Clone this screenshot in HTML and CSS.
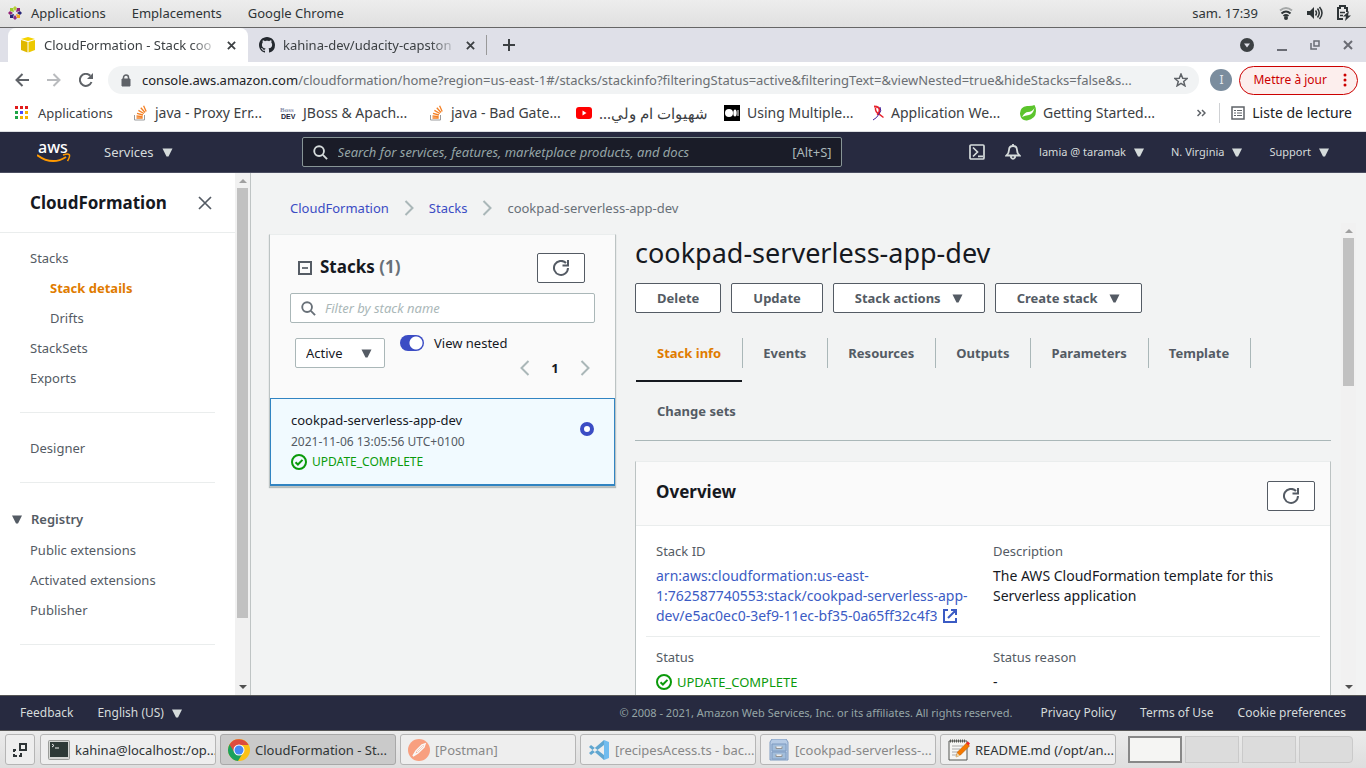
FILE: index.html
```html
<!DOCTYPE html>
<html lang="en">
<head>
<meta charset="utf-8">
<title>CloudFormation - Stack cookpad-serverless-app-dev</title>
<link rel="stylesheet" href="styles.css">
</head>
<body>
<svg class="defs" aria-hidden="true">
  <symbol id="caret" viewBox="0 0 10 9"><path d="M0 0.5h10L6 8.5H4z"/></symbol>
  <symbol id="refresh" viewBox="0 0 16 16"><path d="M15 8a7 7 0 1 1-2-5M15 0v5.5h-5.5" fill="none" stroke="currentColor" stroke-width="2"/></symbol>
  <symbol id="search" viewBox="0 0 16 16"><circle cx="6.5" cy="6.5" r="5.2" fill="none" stroke="currentColor" stroke-width="2"/><path d="M10.5 10.5L15 15" stroke="currentColor" stroke-width="2"/></symbol>
  <symbol id="chev" viewBox="0 0 10 16"><path d="M1.5 1L8.5 8l-7 7" fill="none" stroke="#aab7b8" stroke-width="2"/></symbol>
  <symbol id="check" viewBox="0 0 16 16"><circle cx="8" cy="8" r="7" fill="none" stroke="currentColor" stroke-width="2"/><path d="M4.5 8.2l2.4 2.3 4.6-4.6" fill="none" stroke="currentColor" stroke-width="2"/></symbol>
  <symbol id="cross" viewBox="0 0 10 10"><path d="M1 1l8 8M9 1L1 9" stroke="currentColor" stroke-width="2"/></symbol>
  <symbol id="overflow" viewBox="0 0 16 16"><path d="M2.5 10v5h10v-5" fill="none" stroke="#9a9b9d" stroke-width="1"/><path d="M4.5 13h6.2M4.5 11l6.1 .6M5 8.4l6 1.6M6.4 5.4l5.5 3.1M8.8 2.7l4.2 4.8M11.6 .8l2.6 5.7" stroke="#f48024" stroke-width="1.3"/></symbol>
</svg>

<header class="desk-top">
  <nav class="desk-menu">
    <button><svg width="14" height="14" viewBox="0 0 14 14"><path d="M7 0l2 2-2 3-2-3z" fill="#b7cf35"/><path d="M7 14l2-2-2-3-2 3z" fill="#8c2d85"/><path d="M0 7l2-2 3 2-3 2z" fill="#932279"/><path d="M14 7l-2-2-3 2 3 2z" fill="#262577"/><path d="M2 2h3l1 4-4-1z" fill="#9ccd2a"/><path d="M12 2v3l-4 1 1-4z" fill="#932279"/><path d="M2 12V9l4-1-1 4z" fill="#262577"/><path d="M12 12H9L8 8l4 1z" fill="#efa724"/></svg>Applications</button>
    <button>Emplacements</button>
    <button>Google Chrome</button>
  </nav>
  <div class="desk-status">
    <span>sam. 17:39</span>
    <svg width="14" height="14" viewBox="0 0 14 14" fill="none" stroke="#2e3436" stroke-width="2"><path d="M1 4.500Q7-.5 13 4.500" stroke="#a5a8a8"/><path d="M2.500 7.500Q7 3.500 11.500 7.500"/><path d="M4.500 10Q7 8 9.500 10"/><circle cx="7" cy="12" r="1" fill="#2e3436"/></svg>
    <svg width="16" height="14" viewBox="0 0 16 14" fill="none" stroke="#2e3436" stroke-width="1.500"><path d="M0 5h3l4-4v12L3 9H0z" fill="#2e3436" stroke="none"/><path d="M8.500 4.500q2 2.500 0 5M10.500 2.500q3.500 4.500 0 9M12.500 1q5 6 0 12"/></svg>
    <svg width="14" height="16" viewBox="0 0 14 16" fill="none" stroke="#2e3436" stroke-width="2"><path d="M6 14H1V3h2V1h5v2h2v4"/><path d="M3 7.500h5M3 10.500h3" stroke-width="1.500"/><path d="M12 6l-6 5.500h3L8 16l6-5.500h-3z" fill="#2e3436" stroke="none"/></svg>
  </div>
</header>

<div class="tabstrip">
  <div class="tab tab-on">
    <svg width="16" height="16" viewBox="0 0 16 16"><path d="M8 0l7 2-7 2-7-2z" fill="#f5d300"/><path d="M1 3l6.500 2v10.500L1 13z" fill="#e0b800"/><path d="M15 3L8.500 5v10.500L15 13z" fill="#edc900"/></svg>
    <span class="tab-name">CloudFormation - Stack coo</span>
    <button class="tab-x" aria-label="Close tab"><svg width="9" height="9"><use href="#cross"/></svg></button>
  </div>
  <div class="tab">
    <svg width="16" height="16" viewBox="0 0 16 16"><path fill="#24292f" d="M8 0C3.580 0 0 3.580 0 8c0 3.540 2.290 6.530 5.470 7.590.4.070.55-.17.55-.38v-1.490c-2.010.37-2.530-.49-2.690-.94-.09-.23-.48-.94-.82-1.130-.28-.15-.68-.52-.01-.53.63-.01 1.080.58 1.230.82.72 1.210 1.870.87 2.330.66.07-.52.28-.87.51-1.070-1.780-.2-3.640-.89-3.640-3.950 0-.87.31-1.590.82-2.150-.08-.2-.36-1.020.08-2.120 0 0 .67-.21 2.200.82.64-.18 1.320-.27 2-.27s1.360.09 2 .27c1.530-1.040 2.200-.82 2.200-.82.44 1.100.16 1.920.08 2.120.51.56.82 1.270.82 2.150 0 3.070-1.870 3.750-3.650 3.950.29.25.54.73.54 1.480v2.200c0 .21.15.46.55.38A8.010 8.010 0 0 0 16 8c0-4.420-3.580-8-8-8z"/></svg>
    <span class="tab-name">kahina-dev/udacity-capston</span>
    <button class="tab-x" aria-label="Close tab"><svg width="9" height="9"><use href="#cross"/></svg></button>
  </div>
  <button class="new-tab" aria-label="New tab"><svg width="12" height="12" viewBox="0 0 12 12"><path d="M6 0v12M0 6h12" stroke="#3c4043" stroke-width="2"/></svg></button>
  <div class="win-btns">
    <button aria-label="Search tabs"><svg width="14" height="14" viewBox="0 0 14 14"><circle cx="7" cy="7" r="7" fill="#3c4043"/><path d="M4 5.500h6L7 9.500z" fill="#dfe0e8"/></svg></button>
    <button aria-label="Minimize"><svg width="10" height="12" viewBox="0 0 10 12"><path d="M0 11h10" stroke="#6a6c74" stroke-width="2"/></svg></button>
    <button aria-label="Restore"><svg width="10" height="10" viewBox="0 0 10 10" fill="none" stroke="#6a6c74"><path d="M4 1h5v5H4z" stroke-width="1.500"/><path d="M1 3v6h6" stroke-width="1.500"/></svg></button>
    <button aria-label="Close"><svg width="10" height="10"><use href="#cross"/></svg></button>
  </div>
</div>

<div class="toolbar">
  <button aria-label="Back"><svg width="14" height="14" viewBox="0 0 14 14" fill="none" stroke="#5f6368" stroke-width="2"><path d="M14 7H2M7.500 1L1.500 7l6 6"/></svg></button>
  <button aria-label="Forward"><svg width="14" height="14" viewBox="0 0 14 14" fill="none" stroke="#b9bbbe" stroke-width="2"><path d="M0 7h12M6.500 1l6 6-6 6"/></svg></button>
  <button aria-label="Reload"><svg width="14" height="14" viewBox="0 0 14 14"><path d="M12.500 9A6 6 0 1 1 11.300 2.800" fill="none" stroke="#5f6368" stroke-width="2"/><path d="M14 0v6H8z" fill="#5f6368"/></svg></button>
  <div class="omnibox">
    <svg width="10" height="13" viewBox="0 0 10 13"><path d="M1 5h8v7H1z" fill="#5f6368" stroke="#5f6368"/><path d="M2.500 5V3.500a2.500 2.500 0 0 1 5 0V5" fill="none" stroke="#5f6368" stroke-width="1.500"/></svg>
    <span class="url"><b>console.aws.amazon.com</b>/cloudformation/home?region=us-east-1#/stacks/stackinfo?filteringStatus=active&amp;filteringText=&amp;viewNested=true&amp;hideStacks=false&amp;s...</span>
    <button aria-label="Bookmark"><svg width="14" height="14" viewBox="0 0 14 14" fill="none"><path d="M7 1l1.700 4.200 4.500.3-3.500 2.900 1.200 4.400L7 10.400l-3.900 2.400 1.200-4.400L.8 5.500l4.500-.3z" stroke="#5f6368" stroke-width="1.500"/></svg></button>
  </div>
  <button class="avatar">I</button>
  <button class="update">Mettre à jour <svg width="4" height="14" viewBox="0 0 4 14"><circle cx="2" cy="2" r="1.500"/><circle cx="2" cy="7" r="1.500"/><circle cx="2" cy="12" r="1.500"/></svg></button>
</div>

<nav class="bookmarks">
  <a class="apps" href="#"><svg width="14" height="14" viewBox="0 0 14 14"><path d="M0 0h3v3H0zM5 0h3v3H5zM10 0h3v3h-3z" fill="#e01b1b"/><path d="M0 5h3v3H0zM0 10h3v3H0z" fill="#1ea446"/><path d="M5 5h3v3H5z" fill="#4a4aff"/><path d="M10 5h3v3h-3zM5 10h3v3H5zM10 10h3v3h-3z" fill="#f5b400"/></svg>Applications</a>
  <a class="mark" href="#"><svg width="16" height="16"><use href="#overflow"/></svg>java - Proxy Err...</a>
  <a class="mark" href="#"><svg width="16" height="16" viewBox="0 0 16 16"><text x="0" y="7" class="jb1">Boss</text><text x="1" y="14" class="jb2">DEV</text></svg>JBoss &amp; Apach...</a>
  <a class="mark" href="#"><svg width="16" height="16"><use href="#overflow"/></svg>java - Bad Gate...</a>
  <a class="mark" href="#"><svg width="16" height="12" viewBox="0 0 16 12"><rect width="16" height="12" rx="3" fill="#f00"/><path d="M6.500 3.500v5L10.500 6z" fill="#fff"/></svg><span class="arabic" dir="rtl" lang="ar">شهيوات ام ولي...</span></a>
  <a class="mark" href="#"><svg width="16" height="16" viewBox="0 0 16 16"><path d="M0 0h16v16H0z" fill="#000"/><circle cx="5" cy="8" r="4" fill="#fff"/><ellipse cx="11" cy="8" rx="1.700" ry="3.500" fill="#fff"/><path d="M13.500 5h1v6h-1z" fill="#fff"/></svg>Using Multiple...</a>
  <a class="mark" href="#"><svg width="12" height="16" viewBox="0 0 12 16" fill="none"><path d="M2 1.500q6 0 5.500 4T5 9" stroke="#e8232d" stroke-width="2"/><path d="M3.500 3q-.5 4 4 6.500l4 3" stroke="#e8232d" stroke-width="1.500"/><path d="M8 2q2 4-1 7-2 4-6 6" stroke="#40209a" stroke-width="1"/></svg>Application We...</a>
  <a class="mark" href="#"><svg width="16" height="16" viewBox="0 0 16 16"><path d="M14.500 0q1.500 2.500 1.500 6 0 8-9 9.500Q1 16 0 9q-.2-7 7-8 5 .3 7.500-1z" fill="#5bc42c"/><path d="M2 12q3-5 6-5 4 0 6.500-4Q13 9 9 10q-4 .3-7 2z" fill="#fff"/></svg>Getting Started...</a>
  <div class="bm-end"><button aria-label="More bookmarks"><svg width="9" height="8" viewBox="0 0 9 8" fill="none"><path d="M.5 1l3 3-3 3M5 1l3 3-3 3" stroke="#5f6368" stroke-width="1.500"/></svg></button><a href="#" class="reading"><svg width="14" height="14" viewBox="0 0 14 14" stroke="#5f6368" fill="none"><path d="M1 1h12v12H1z" stroke-width="1.500"/><path d="M3 4.500h2M3 7h2M3 9.500h2M6 4.500h5M6 7h5M6 9.500h5"/></svg>Liste de lecture</a></div>
</nav>

<header class="aws-head">
  <a class="logo" href="#" aria-label="AWS home"><svg width="34" height="24" viewBox="0 0 34 24"><text x="1" y="13" class="logo-text">aws</text><path d="M0 15q15 11 29 2" fill="none" stroke="#f90" stroke-width="2"/><path d="M26 15q6-2 6.500 0t-2 6" fill="none" stroke="#f90" stroke-width="1.500"/></svg></a>
  <button class="services">Services <svg width="11" height="9"><use href="#caret"/></svg></button>
  <label class="aws-search"><svg width="15" height="15"><use href="#search"/></svg><input aria-label="Search services" placeholder="Search for services, features, marketplace products, and docs"><kbd>[Alt+S]</kbd></label>
  <div class="aws-right">
    <button aria-label="CloudShell"><svg width="16" height="16" viewBox="0 0 16 16" fill="none" stroke="currentColor" stroke-width="1.700"><rect x="1" y="1" width="14" height="14" rx="1"/><path d="M4 3.500L8.500 8 4 12.500M9 12.300h5"/></svg></button>
    <button class="bell" aria-label="Notifications"><svg width="16" height="16" viewBox="0 0 16 16" fill="none" stroke="currentColor" stroke-width="1.800"><path d="M1.500 11.500Q4 9 4 6q0-4 4-4t4 4q0 3 2.500 5.500zM8 0v2M6 12v1.500q2 2.500 4 0V12"/></svg></button>
    <button class="user">lamia @ taramak <svg width="10" height="9"><use href="#caret"/></svg></button>
    <button class="region">N. Virginia <svg width="10" height="9"><use href="#caret"/></svg></button>
    <button class="support">Support <svg width="10" height="9"><use href="#caret"/></svg></button>
  </div>
</header>

<div class="workspace">
  <aside class="side">
    <div class="side-in">
      <div class="side-head"><h2>CloudFormation</h2><button aria-label="Close navigation"><svg width="14" height="14" viewBox="0 0 14 14"><path d="M1 1l12 12M13 1L1 13" stroke="#545b64" stroke-width="1.700"/></svg></button></div>
      <nav class="side-nav">
        <a href="#">Stacks</a><a class="sub on" href="#">Stack details</a><a class="sub" href="#">Drifts</a><a href="#">StackSets</a><a href="#">Exports</a>
        <hr>
        <a href="#">Designer</a>
        <hr>
        <button class="group"><svg width="10" height="9"><use href="#caret"/></svg>Registry</button>
        <a href="#">Public extensions</a><a href="#">Activated extensions</a><a href="#">Publisher</a>
        <hr>
      </nav>
    </div>
    <div class="sbar"><i class="up"></i><i class="thumb"></i><i class="down"></i></div>
  </aside>

  <main class="content">
    <nav class="crumbs"><a href="#">CloudFormation</a><svg width="10" height="16"><use href="#chev"/></svg><a href="#">Stacks</a><svg width="10" height="16"><use href="#chev"/></svg><span>cookpad-serverless-app-dev</span></nav>
    <div class="cols">
      <section class="stacks">
        <div class="stacks-top">
          <div class="stacks-title"><svg width="14" height="14" viewBox="0 0 14 14" fill="none" stroke="#545b64"><path d="M1 1h12v12H1z" stroke-width="2"/><path d="M4 7h6" stroke-width="1.700"/></svg><h2>Stacks <span>(1)</span></h2><button class="btn icon-btn" aria-label="Refresh stacks"><svg width="16" height="16"><use href="#refresh"/></svg></button></div>
          <label class="filter"><svg width="15" height="15"><use href="#search"/></svg><input aria-label="Filter stacks" placeholder="Filter by stack name"></label>
          <div class="filters">
            <div class="pick"><select aria-label="Stack status"><option>Active</option></select><svg width="11" height="9"><use href="#caret"/></svg></div>
            <div class="filters-right">
              <label class="nested"><input type="checkbox" checked>View nested</label>
              <div class="pager"><button aria-label="Previous page"><svg class="flip" width="10" height="16"><use href="#chev"/></svg></button><b>1</b><button aria-label="Next page"><svg width="10" height="16"><use href="#chev"/></svg></button></div>
            </div>
          </div>
        </div>
        <label class="stack-row">
          <span class="stack-text"><span class="stack-name">cookpad-serverless-app-dev</span><span class="stack-date">2021-11-06 13:05:56 UTC+0100</span><span class="ok small"><svg width="16" height="16"><use href="#check"/></svg>UPDATE_COMPLETE</span></span>
          <input type="radio" name="stack" checked>
        </label>
      </section>

      <section class="detail">
        <h1>cookpad-serverless-app-dev</h1>
        <div class="actions"><button class="btn">Delete</button><button class="btn">Update</button><button class="btn">Stack actions <svg width="11" height="9"><use href="#caret"/></svg></button><button class="btn">Create stack <svg width="11" height="9"><use href="#caret"/></svg></button></div>
        <nav class="tabs"><a class="on" href="#">Stack info</a><a href="#">Events</a><a href="#">Resources</a><a href="#">Outputs</a><a href="#">Parameters</a><a href="#">Template</a><a class="last" href="#">Change sets</a></nav>
        <section class="card">
          <div class="card-head"><h2>Overview</h2><button class="btn icon-btn" aria-label="Refresh overview"><svg width="16" height="16"><use href="#refresh"/></svg></button></div>
          <dl class="facts">
            <div><dt>Stack ID</dt><dd><a href="#">arn:aws:cloudformation:us-east-<wbr>1:762587740553:stack/cookpad-serverless-app-<wbr>dev/e5ac0ec0-3ef9-11ec-bf35-0a65ff32c4f3 <svg width="14" height="14" viewBox="0 0 14 14" fill="none" stroke="currentColor" stroke-width="2"><path d="M5 1H1v12h12V9M8 1h5v5M13 1L5 9"/></svg></a></dd></div>
            <div><dt>Description</dt><dd>The AWS CloudFormation template for this Serverless application</dd></div>
          </dl>
          <dl class="facts">
            <div><dt>Status</dt><dd class="ok"><svg width="16" height="16"><use href="#check"/></svg>UPDATE_COMPLETE</dd></div>
            <div><dt>Status reason</dt><dd>-</dd></div>
          </dl>
        </section>
      </section>
      <div class="sbar main-bar"><i class="up"></i><i class="thumb"></i><i class="down"></i></div>
    </div>
  </main>
</div>

<footer class="aws-foot">
  <a href="#">Feedback</a><button>English (US) <svg width="10" height="9"><use href="#caret"/></svg></button>
  <span class="legal">© 2008 - 2021, Amazon Web Services, Inc. or its affiliates. All rights reserved.</span><a href="#">Privacy Policy</a><a href="#">Terms of Use</a><a href="#">Cookie preferences</a>
</footer>

<footer class="taskbar">
  <button class="task show" aria-label="Show desktop"><svg width="14" height="14" viewBox="0 0 14 14" fill="none" stroke="#2e3436" stroke-width="2"><path d="M7 1h6v6H7z"/><path d="M3 7H1v2M1 11v2h3M6 13h2v-3"/></svg></button>
  <button class="task"><svg width="22" height="22" viewBox="0 0 22 22"><rect x=".5" y="1.500" width="21" height="19" rx="1" fill="#d5d7d4" stroke="#9b9d9a"/><path d="M2 3h18v15H2z" fill="#2e3a37"/><path d="M4 5l2 1.500L4 8M7 9h4" fill="none" stroke="#eee"/></svg>kahina@localhost:/op...</button>
  <button class="task current"><svg width="22" height="22" viewBox="0 0 22 22"><circle cx="11" cy="11" r="11" fill="#fbc116"/><path d="M11 11L1.500 5.500A11 11 0 0 0 10 22l5.500-9z" fill="#1aa15f"/><path d="M1.500 5.500A11 11 0 0 1 20.600 6H11l-4.500 7.500z" fill="#dd4b3e"/><circle cx="11" cy="11" r="5.500" fill="#fff"/><circle cx="11" cy="11" r="4.500" fill="#4688f4"/></svg>CloudFormation - St...</button>
  <button class="task dim"><svg width="22" height="22" viewBox="0 0 22 22"><circle cx="11" cy="11" r="11" fill="#ff6c37"/><path d="M5 17l3-5 6-6 3-1-1 3-6 6z" fill="none" stroke="#fff" stroke-width="1.500"/><path d="M9 13l6-6" stroke="#fff"/></svg>[Postman]</button>
  <button class="task dim"><svg width="22" height="22" viewBox="0 0 22 22"><path d="M1 8l2-2 13 10v5zM1 14l2 2L16 6V1z" fill="#0277bd"/><path d="M16 1l5 2v16l-5 2z" fill="#1f9cf0"/></svg>[recipesAcess.ts - bac...</button>
  <button class="task dim"><svg width="22" height="22" viewBox="0 0 22 22"><path d="M4 0h14l2 3v18H2V3z" fill="#92b4df" stroke="#3465a4"/><path d="M4 5h14v7H4zM4 13h14v7H4z" fill="#729fcf" stroke="#3465a4"/><path d="M8 7.500v2h6v-2M8 15.500v2h6v-2" fill="#eee" stroke="#555"/></svg>[cookpad-serverless-...</button>
  <button class="task"><svg width="22" height="22" viewBox="0 0 22 22"><path d="M1 2h18v19H1z" fill="#f6f6f4" stroke="#555753"/><path d="M2 2h16" stroke="#555753" stroke-width="3" stroke-dasharray="1 1"/><path d="M4 7h11M4 10h8M4 13h6M4 16h5" stroke="#aaa"/><path d="M8 18l1.500-5 9-9 3 3-9 9z" fill="#f57900" stroke="#a85600" stroke-width=".5"/><path d="M8 18l1.300-4 2.700 2.700z" fill="#e9d6a8"/><path d="M18 4l2-1.500 2 2-1.500 2z" fill="#ef2929"/></svg>README.md (/opt/an...</button>
  <div class="desks"><i class="now"></i><i></i><i></i><i></i></div>
</footer>
</body>
</html>
```
FILE: styles.css
```css
* { box-sizing: border-box; }
body { margin: 0; height: 100vh; display: flex; flex-direction: column; overflow: hidden; font: 13px/20px "Noto Sans", sans-serif; color: #16191f; background: #f2f3f3; }
body > * { flex: none; }
button { font: inherit; color: inherit; background: none; border: 0; padding: 0; display: flex; align-items: center; white-space: nowrap; }
a { color: inherit; text-decoration: none; }
h1, h2, dl, dd { margin: 0; }
svg { flex: none; display: block; }
svg:not([fill]) { fill: currentColor; }
.defs { position: absolute; width: 0; height: 0; }

.desk-top { height: 28px; padding: 0 15px 2px 8px; display: flex; align-items: center; justify-content: space-between; background: linear-gradient(#ededed, #e0e0e0); border-bottom: 1px solid #666; color: #2e3436; }
.desk-menu { display: flex; gap: 26px; }
.desk-menu button { gap: 9px; }
.desk-status { display: flex; align-items: center; gap: 14px; }
.desk-status span { margin-right: 7px; }

.tabstrip { height: 34px; display: flex; align-items: stretch; padding-left: 8px; background: #dfe0e8; color: #3c4043; }
.tab { width: 238px; display: flex; align-items: center; padding: 0 11px; gap: 8px; }
.tab-on { width: 240px; padding: 0 12px; background: #fff; border-radius: 8px 8px 0 0; }
.tab-name { flex: 1; overflow: hidden; white-space: nowrap; mask-image: linear-gradient(90deg, #000 84%, transparent 100%); }
.new-tab { border-left: 1px solid #999; margin: 7px 0; padding-left: 16px; }
.win-btns { margin-left: auto; display: flex; gap: 23px; padding-right: 13px; color: #6a6c74; }

.toolbar { height: 36px; background: #fff; display: flex; align-items: center; padding: 0 8px 0 15px; gap: 18px; }
.omnibox { flex: 1; min-width: 0; height: 28px; margin-left: -3px; margin-right: -7px; padding: 0 11px 0 13px; display: flex; align-items: center; gap: 11px; border-radius: 14px; background: #f1f3f4; color: #6b6f73; }
.url { flex: 1; overflow: hidden; white-space: nowrap; }
.url b { font-weight: 400; color: #202124; }
.avatar { width: 22px; height: 22px; border-radius: 50%; background: #7b8d9e; color: #e4e8ec; justify-content: center; font-size: 12px; }
.update { height: 29px; margin-left: -11px; padding: 0 10px 0 13px; gap: 16px; border: 1px solid #c00; border-radius: 15px; background: #fceeed; color: #c00; font-size: 12px; }

.bookmarks { height: 34px; background: #fff; border-bottom: 1px solid #dcdee2; padding: 0 14px 3px 15px; display: flex; align-items: center; color: #3c4043; font-size: 14px; }
.bookmarks a { display: flex; align-items: center; gap: 7px; white-space: nowrap; }
.apps { width: 117px; font-size: 13px; }
.bookmarks .apps { gap: 9px; }
.mark { flex: 0 1 148px; min-width: 0; }
.arabic { font-size: 15px; }
.jb1 { font: 700 7px "Liberation Serif", serif; fill: #8990ad; }
.jb2 { font: 700 7px "Liberation Sans", sans-serif; fill: #23253a; }
.bm-end { margin-left: auto; display: flex; align-items: center; gap: 13px; }
.reading { border-left: 1px solid #cfd1d4; padding-left: 11px; color: #202124; }

.aws-head { height: 41px; display: flex; align-items: center; background: #272a40; border-bottom: 1px solid #4a4d60; color: #d5dbdb; padding-left: 37px; padding-right: 37px; }
.logo-text { font: 500 16px "Noto Sans", sans-serif; fill: #fff; }
.services { margin-left: 33px; gap: 8px; }
.aws-search { flex: 0 1 540px; height: 30px; margin-left: 129px; display: flex; align-items: center; gap: 10px; padding: 0 9px 0 10px; border: 1px solid #879596; border-radius: 2px; background: #1a1c28; }
input { font: inherit; border: 0; background: none; outline: 0; padding: 0; margin: 0; min-width: 0; flex: 1; }
input::placeholder { font-style: italic; color: #95a5a6; opacity: 1; }
kbd { font: inherit; color: #aab7b8; }
.aws-right { margin-left: auto; display: flex; align-items: center; font-size: 11px; }
.aws-right button { gap: 8px; }
.aws-right .bell { margin-left: 20px; }
.aws-right .user { margin-left: 18px; }
.aws-right .region, .aws-right .support { margin-left: 27px; }

.workspace { flex: 1; min-height: 0; display: flex; overflow: hidden; }
.side { width: 251px; flex: none; display: flex; border-right: 1px solid #bfc4c4; background: #fff; }
.side-in { flex: 1; overflow: hidden; color: #545b64; }
.side-head { height: 60px; display: flex; align-items: center; justify-content: space-between; padding: 0 23px 0 30px; border-bottom: 1px solid #eaeded; }
h2 { font-size: 17px; line-height: 24px; font-weight: 700; color: #16191f; }
.side-nav { padding-top: 10px; }
.side-nav a { display: block; line-height: 30px; padding-left: 30px; }
.side-nav .sub { padding-left: 50px; }
.side-nav .on { color: #e07b00; font-weight: 700; }
.side-nav hr { margin: 19px 20px 20px; border: 0; border-top: 1px solid #eaeded; }
.group { width: 100%; height: 32px; padding-left: 12px; gap: 9px; font-weight: 600; }
.sbar { width: 15px; flex: none; display: flex; flex-direction: column; align-items: center; background: #f1f1f1; }
.sbar i { flex: none; }
.up, .down { width: 0; height: 0; border: 4px solid transparent; border-top: 0; border-bottom: 4px solid #a0a0a0; margin: 6px 0 5px; }
.thumb { width: 11px; height: 430px; background: #c1c1c1; }
.down { border-bottom: 0; border-top: 4px solid #505050; margin: auto 0 6px; }

.content { flex: 1; min-width: 0; display: flex; flex-direction: column; padding: 25px 10px 0 18px; }
.crumbs { height: 20px; display: flex; align-items: center; gap: 15px; padding-left: 21px; color: #687078; }
.crumbs a { color: #3b4cc4; }
.cols { flex: 1; min-height: 0; display: flex; align-items: flex-start; }
.stacks { width: 347px; flex: none; margin-top: 16px; border: 1px solid #bcc3c3; border-top-color: #eaeded; box-shadow: 0 1px 1px #b5bdbd; background: #fafafa; }
.stacks-top { height: 163px; padding: 18px 20px 0; }
.stacks-title { display: flex; align-items: center; gap: 8px; padding: 0 10px 0 8px; }
.stacks-title h2 { flex: 1; padding-bottom: 3px; }
.stacks-title span { color: #687078; }
.btn { height: 30px; border: 1px solid #545b64; border-radius: 2px; background: #fff; color: #545b64; font-weight: 700; padding: 0 21px; gap: 11px; }
.icon-btn { width: 48px; padding: 0; justify-content: center; }
.filter { height: 30px; margin-top: 10px; display: flex; align-items: center; gap: 9px; padding: 0 10px; border: 1px solid #aab7b8; border-radius: 2px; background: #fff; color: #687078; }
.filter input::placeholder { color: #aab7b8; }
.filters { display: flex; padding: 10px 5px 0; }
.pick { display: grid; align-items: center; width: 90px; height: 30px; margin-top: 5px; color: #545b64; }
.pick > * { grid-area: 1 / 1; }
.pick select { appearance: none; width: 100%; height: 30px; font: inherit; padding: 0 10px; border: 1px solid #aab7b8; border-radius: 2px; background: #fff; color: #16191f; }
.pick svg { justify-self: end; margin-right: 13px; pointer-events: none; }
.filters-right { flex: 1; padding-left: 15px; }
.nested { display: flex; align-items: center; gap: 10px; }
.nested input { appearance: none; flex: none; width: 24px; height: 16px; border-radius: 8px; background: radial-gradient(circle at 16px 8px, #fff 6px, #3b4cc4 7px); }
.pager { display: flex; justify-content: flex-end; gap: 21px; align-items: center; margin-top: 5px; }
.pager b { width: 8px; text-align: center; }
.flip { transform: scaleX(-1); }
.stack-row { display: flex; align-items: center; padding: 11px 20px 14px; border: 1px solid #3184c2; border-bottom-width: 2px; background: #f1faff; }
.stack-text { flex: 1; display: flex; flex-direction: column; }
.stack-date { font-size: 12px; line-height: 24px; color: #545b64; }
.stack-row input { appearance: none; flex: none; width: 14px; height: 14px; margin-bottom: 22px; border-radius: 50%; border: 4px solid #3b4cc4; background: #fff; }
.ok { display: flex; align-items: center; gap: 5px; color: #0b9a0b; }
.small { font-size: 12px; line-height: 16px; }

.detail { flex: 1; min-width: 0; margin-left: 19px; margin-right: 10px; padding-top: 18px; }
h1 { font-size: 27px; line-height: 34px; font-weight: 400; }
.actions { display: flex; gap: 10px; margin-top: 13px; }
.tabs { display: flex; flex-wrap: wrap; margin-top: 11px; padding: 0 1px; border-bottom: 1px solid #aab7b8; color: #545b64; font-weight: 700; }
.tabs a { position: relative; height: 58px; padding: 19px 21px; white-space: nowrap; border-bottom: 2px solid transparent; }
.tabs a::after { content: ""; position: absolute; right: -1px; top: 14px; height: 30px; border-right: 1px solid #aab7b8; }
.tabs .on { color: #e07b00; border-color: #16191f; }
.tabs .last::after { display: none; }
.card { margin-top: 20px; border: 1px solid #bcc3c3; border-top-color: #eaeded; background: #fff; height: 320px; }
.card-head { height: 64px; padding: 4px 15px 0 20px; display: flex; align-items: center; justify-content: space-between; background: #fafafa; border-bottom: 1px solid #eaeded; }
.card-head h2 { padding-bottom: 8px; }
.facts { display: grid; grid-template-columns: 1fr 1fr; margin: 0 10px; padding: 15px 0 10px; border-bottom: 1px solid #eaeded; }
.facts + .facts { padding-top: 10px; border: 0; }
.facts > div { padding: 0 10px; }
dt { color: #545b64; margin-bottom: 5px; }
.facts dd { font-size: 14px; }
.facts .ok { font-size: 13px; }
.facts a { color: #3b5bc4; }
.facts a svg { display: inline-block; vertical-align: -2px; margin-left: 2px; }
.main-bar { align-self: stretch; margin-top: 5px; }
.main-bar .thumb { height: 148px; }

.aws-foot { height: 36px; display: flex; align-items: center; background: #272a40; border: 1px solid #555; border-width: 1px 0; color: #d5dbdb; padding: 0 20px; gap: 24px; font-size: 12px; }
.aws-foot button { gap: 8px; }
.legal { margin-left: auto; margin-right: 4px; color: #95a5a6; font-size: 11px; }

.taskbar { height: 37px; display: flex; align-items: center; gap: 4px; padding: 0 13px 0 5px; background: linear-gradient(#ebebeb, #dedede); color: #2e3436; }
.task { flex: 0 1 176px; min-width: 0; height: 31px; padding: 0 7px; gap: 5px; border: 1px solid #b5b5b5; border-radius: 3px; background: #eee; overflow: hidden; }
.show { flex: none; width: 30px; margin-right: 1px; }
.current { background: #cacaca; border-color: #a8a8a8; }
.dim { color: #888; }
.dim svg { opacity: .6; }
.desks { margin-left: auto; display: flex; gap: 3px; }
.desks i { width: 54px; height: 27px; background: #dcdcdc; border: 1px solid #cacaca; }
.desks i:last-child { border-radius: 0 4px 4px 0; }
.desks .now { background: #f5f5f3; border: 2px solid #888; }
```
